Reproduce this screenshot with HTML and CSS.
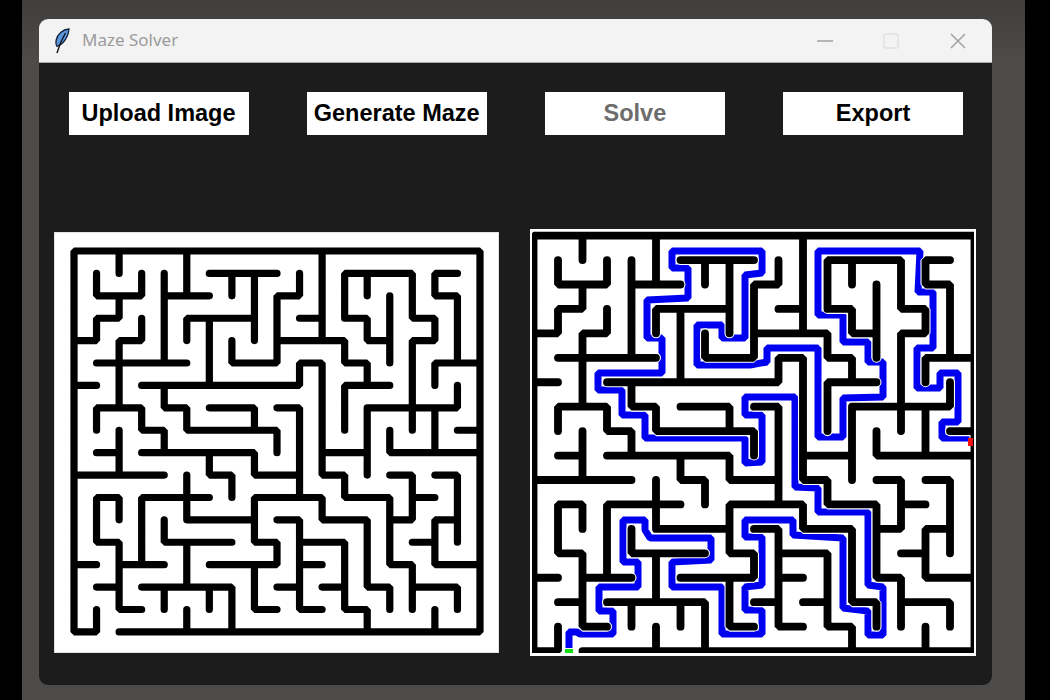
FILE: index.html
```html
<!DOCTYPE html>
<html lang="en">
<head>
  <meta charset="UTF-8" />
  <title>Maze Solver</title>
  <link rel="stylesheet" href="styles.css">
</head>
<body>
  <div class="desktop">
    <div class="window">
      <div class="titlebar">
        <svg class="app-icon" width="16" height="26" viewBox="0 0 16 26">
          <path class="feather" d="M15 1C8.500 1.500 3.500 6 2.200 12C1.700 14.500 2 17 3.200 18.500C8 16.500 11.500 12.500 13.500 7.500C14.300 5.500 14.800 3 15 1Z"/>
          <path class="quill" d="M11.500 5C8.500 10 5.500 16 3 25"/>
        </svg>
        <span class="title">Maze Solver</span>
        <div class="win-controls">
          <div class="win-btn">
            <svg width="18" height="18" viewBox="0 0 18 18"><path class="ctl" d="M1 9H17"/></svg>
          </div>
          <div class="win-btn">
            <svg width="18" height="18" viewBox="0 0 18 18"><rect class="ctl ctl-off" x="2" y="2" width="14" height="14" rx="1.500"/></svg>
          </div>
          <div class="win-btn">
            <svg width="18" height="18" viewBox="0 0 18 18"><path class="ctl" d="M2 2L16 16M16 2L2 16"/></svg>
          </div>
        </div>
      </div>

      <div class="toolbar">
        <button class="tool-btn">Upload Image</button>
        <button class="tool-btn">Generate Maze</button>
        <button class="tool-btn is-disabled">Solve</button>
        <button class="tool-btn">Export</button>
      </div>

      <div class="panels">
        <!-- source maze, drawn in grid units: 18 columns by 17 rows -->
        <div class="panel panel-source">
          <svg class="maze" viewBox="-0.887 -0.848 19.73 18.79" preserveAspectRatio="none">
            <g class="wall-ink">
              <path id="walls" class="walls" d="M1 16V17H0V0H18V17H2
                M2 0V1M5 0V2M4 2H6M1 1V2H3V1M2 2V3H1V4H0
                M3 3V4H2V7M1 8V7H3V8H4V9M4 1V5M1 5H5M0 6H1
                M3 6H10V5H11V10H12V11H14V14H15V16
                M6 3V6M5 4V3H8M8 1V4M6 1H9M7 1V2
                M10 1V2H9V5H7V4M11 0V4
                M4 6V7H5V8H9V9M6 7H8V8M9 7H10V11
                M2 8V10M0 10H4M1 9H2M3 9H8V10H10M6 9V10H7V11
                M5 10V12M6 11H3V14M5 12H8
                M6 14H9V13H8V11H11V12H13V15H14V16M8 14V16H9
                M2 12V11H1V13H2V16H3M0 14H1M2 14H4M4 12V13H7M5 13V15M1 15H2
                M3 15H7V17M4 15V16M6 15V16M5 16V17
                M9 15H10M9 12H10V16H11M10 13H12V16H13V17M10 14H11M11 15H12
                M11 9H13M13 7V10M17 6V7H13
                M10 3H11M9 4H12V5H13V6M14 6H12V8
                M12 3V1H15V3H16V4H15V8M13 1V2M12 3H13V4H14M14 2V5
                M17 1H16V2H17V5M16 6V5H18M16 7V9M14 8V9H18M17 8H18
                M14 10H15V12H14M15 11H16M16 10H17V13M17 12H16V14H18M15 13H16
                M15 15H17V16M16 16V17"/>
            </g>
          </svg>
        </div>

        <!-- solved maze, path in page pixels so the viewBox is the panel position -->
        <div class="panel panel-solved">
          <svg class="maze" viewBox="532 231 442 422" preserveAspectRatio="none">
            <path class="route" d="M569 648V632H577L580 634H613V611H599V587H638V562H623V520H645V530L650 538H711V560L672 562V587H722V634H762V610H745V587L762 585V537H745V520H793V535L843 538V608L868 611V635H883V587L868 585V512H818V488L795 487V397H745V415H762V462L745 463V438H645V415H622V390H598V373H662V338H647V300L688 298V268H672V251H762V273L745 275V338H722V325H697V365H750L767 362V348H818V437H843V398L883 397V362H868V342H843V315H818V251H920L918 292H933V348H917V388H940V373H958V422H942V438H970"/>
            <g class="wall-halo" transform="translate(533.5 235.6) scale(24.5 24.44)">
              <use href="#walls"/>
            </g>
            <g class="wall-ink" transform="translate(533.5 235.6) scale(24.5 24.44)">
              <use href="#walls"/>
            </g>
            <rect class="mark-end" x="968" y="438" width="5" height="8"/>
            <rect class="mark-start" x="565" y="649" width="8" height="4"/>
          </svg>
        </div>
      </div>
    </div>
  </div>
</body>
</html>
```
FILE: styles.css
```css
html, body {
  margin: 0;
  height: 100%;
  background: #000;
  overflow: hidden;
}

.desktop {
  margin: 0 25px 0 22px;
  height: 700px;
  padding: 19px 33px 15px 17px;
  box-sizing: border-box;
  background: linear-gradient(#3f3e3d, #4c4b49 60px);
}

.window {
  height: 666px;
  background: #1c1c1c;
  border-radius: 9px;
  overflow: hidden;
}

.titlebar {
  display: flex;
  align-items: center;
  height: 44px;
  box-sizing: border-box;
  padding-left: 15px;
  background: #f3f3f3;
  border-bottom: 1px solid #a8a8a8;
}

.app-icon {
  flex: none;
  margin-right: 12px;
  margin-top: 1px;
}

.feather {
  fill: #5a97de;
  stroke: #14233a;
  stroke-width: 1.300;
}

.quill {
  fill: none;
  stroke: #101010;
  stroke-width: 1.400;
}

.title {
  padding-bottom: 2px;
  font-family: "Noto Sans", sans-serif;
  font-size: 17px;
  color: #9b9b9b;
}

.win-controls {
  display: flex;
  margin-left: auto;
  margin-right: 1px;
}

.win-btn {
  display: flex;
  align-items: center;
  justify-content: center;
  width: 66.500px;
  height: 43px;
}

.ctl {
  fill: none;
  stroke: #a0a0a0;
  stroke-width: 1.500;
}

.ctl-off {
  stroke: #e2e2e2;
}

.toolbar {
  display: flex;
  gap: 58.200px;
  padding: 29px 0 0 29.500px;
}

.tool-btn {
  width: 180px;
  height: 43px;
  padding: 0;
  background: #fff;
  border: none;
  border-radius: 0;
  font-family: "Liberation Sans", Arial, sans-serif;
  font-size: 23.500px;
  font-weight: bold;
  color: #000;
}

.tool-btn.is-disabled {
  color: #6d6d6d;
}

.panels {
  display: flex;
  align-items: center;
  gap: 31px;
  margin-top: 94px;
  padding-left: 15px;
}

.panel {
  background: #fff;
  box-sizing: border-box;
}

.panel-source {
  width: 445px;
  height: 421px;
  outline: 1px solid #e2e2e2;
  outline-offset: -1px;
}

.panel-solved {
  width: 446px;
  height: 427px;
  border: 2px solid #fff;
  border-bottom-width: 3px;
}

.maze {
  display: block;
  width: 100%;
  height: 100%;
}

.walls {
  fill: none;
  stroke-linejoin: bevel;
  stroke-linecap: round;
}

.wall-ink {
  stroke: #000;
  stroke-width: 0.320;
}

.wall-halo {
  stroke: #fff;
  stroke-width: 0.410;
}

.route {
  fill: none;
  stroke: #0000f0;
  stroke-width: 7;
  stroke-linejoin: bevel;
}

.mark-end {
  fill: #f01010;
}

.mark-start {
  fill: #10e010;
}
```
